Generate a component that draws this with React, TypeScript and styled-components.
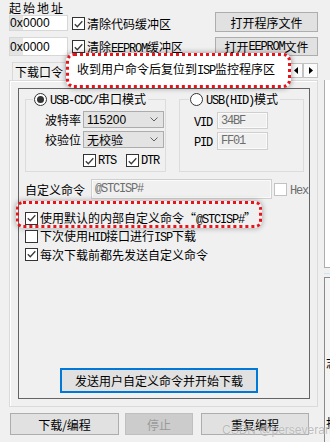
import React from 'react';
import styled, { createGlobalStyle } from 'styled-components';

const GlobalStyle = createGlobalStyle`
  html, body {
    margin: 0;
    padding: 0;
    background: #f0f0f0;
  }
  body {
    font-family: "Noto Sans CJK SC", "Liberation Sans", sans-serif;
    font-size: 12px;
    color: #000;
  }
  * {
    box-sizing: border-box;
  }
`;

const Screen = styled.div`
  position: relative;
  display: flex;
  width: 330px;
  height: 442px;
  overflow: hidden;
  background: #f0f0f0;
`;

const Main = styled.div`
  flex: none;
  width: 319px;
  padding: 0 1px 0 9px;
  display: flex;
  flex-direction: column;
`;

// SimSun-like half width latin
const Mono = styled.span`
  font-family: "Liberation Mono", monospace;
  font-size: 12px;
  letter-spacing: -1.2px;
`;

const Title = styled.div`
  height: 12px;
  line-height: 16px;
  font-size: 12px;
  letter-spacing: 2px;
  white-space: nowrap;
`;

const AddrRow = styled.div<{ $top: number }>`
  display: flex;
  align-items: flex-start;
  height: 20px;
  margin-top: ${({ $top }) => $top}px;
`;

const AddrField = styled.div<{ $dy: number; $h: number }>`
  width: 59px;
  height: ${({ $h }) => $h}px;
  margin-top: ${({ $dy }) => $dy}px;
  background: #fff;
  border: 1px solid #d7d7d7;
  display: flex;
  align-items: stretch;
  font-family: "Liberation Sans", sans-serif;
  font-size: 12px;
`;

const Prefix = styled.span`
  display: flex;
  align-items: center;
  width: 13px;
  background: #e4e4e4;
`;

const Digits = styled.span`
  display: flex;
  align-items: center;
`;

const CheckGroup = styled.label<{ $dy?: number; $gap?: number }>`
  flex: none;
  display: flex;
  align-items: center;
  gap: ${({ $gap }) => $gap ?? 2}px;
  margin-top: ${({ $dy }) => $dy ?? 0}px;
  height: 13px;
  white-space: nowrap;
`;

const Box = styled.span<{ $disabled?: boolean }>`
  flex: none;
  width: 13px;
  height: 13px;
  border: 1px solid ${({ $disabled }) => ($disabled ? '#c2c2c2' : '#333')};
  background: #fff;
  display: inline-flex;
  align-items: center;
  justify-content: center;
`;

const Button = styled.button<{ $w: number; $h: number; $ml?: number; $off?: boolean }>`
  flex: none;
  width: ${({ $w }) => $w}px;
  height: ${({ $h }) => $h}px;
  margin-left: ${({ $ml }) => ($ml === undefined ? 'auto' : `${$ml}px`)};
  padding: 0;
  background: ${({ $off }) => ($off ? '#cccccc' : '#e1e1e1')};
  border: 1px solid ${({ $off }) => ($off ? '#bfbfbf' : '#adadad')};
  color: ${({ $off }) => ($off ? '#9a9a9a' : '#000')};
  font-family: "Noto Sans CJK SC", "Liberation Sans", sans-serif;
  font-size: 12px;
  display: flex;
  align-items: center;
  justify-content: center;
  white-space: nowrap;
`;

const TabStrip = styled.div`
  position: relative;
  z-index: 2;
  display: flex;
  align-items: flex-start;
  height: 23px;
`;

const Tab = styled.div`
  flex: none;
  margin: 5px 0 0 3px;
  width: 54px;
  height: 18px;
  border: 1px solid #d9d9d9;
  border-bottom: none;
  display: flex;
  align-items: center;
  justify-content: center;
`;

const ActiveTab = styled.div`
  position: relative;
  z-index: 2;
  flex: none;
  margin-top: -4px;
  width: 225px;
  height: 35px;
  padding: 5px 0 0 8px;
  background: #fff;
  border: 3px dotted #e8141b;
  border-radius: 8px;
  box-shadow: 0 0 5px 1px rgba(0, 0, 0, 0.3);
  line-height: 16px;
  white-space: nowrap;
`;

const ScrollArrows = styled.div`
  display: flex;
  margin: 6px 0 0 -3px;
`;

const ArrowBox = styled.div`
  width: 15px;
  height: 15px;
  border: 1px solid #c3c3c3;
  background: #fbfbfb;
  display: flex;
  align-items: center;
  justify-content: center;
`;

const TabPage = styled.div`
  display: flex;
  height: 327px;
  border: 1px solid #dadada;
  box-shadow: inset 1px 1px 0 #fff;
  padding: 7px 7px 7px 8px;
`;

const Frame = styled.div`
  flex: 1;
  display: flex;
  flex-direction: column;
  border: 1px solid #646464;
  padding-left: 6px;
`;

const Groups = styled.div`
  display: flex;
  gap: 13px;
  margin-top: 10px;
`;

const Group = styled.div<{ $w: number }>`
  width: ${({ $w }) => $w}px;
  height: 73px;
  border: 1px solid #dcdcdc;
  display: flex;
  flex-direction: column;
`;

const Legend = styled.div<{ $x: number }>`
  align-self: flex-start;
  display: flex;
  align-items: center;
  gap: 3px;
  height: 14px;
  margin: -8px 0 0 ${({ $x }) => $x}px;
  padding: 0 2px 0 1px;
  background: #f0f0f0;
  white-space: nowrap;
`;

const RadioRing = styled.span`
  flex: none;
  width: 13px;
  height: 13px;
  border-radius: 50%;
  border: 1px solid #333;
  background: #fff;
  display: inline-flex;
  align-items: center;
  justify-content: center;
`;

const RadioDot = styled.span`
  width: 7px;
  height: 7px;
  border-radius: 50%;
  background: #333;
`;

const FieldRow = styled.div<{ $top: number; $h?: number; $ml?: number }>`
  display: flex;
  align-items: center;
  height: ${({ $h }) => $h ?? 17}px;
  margin: ${({ $top }) => $top}px 0 0 ${({ $ml }) => $ml ?? 0}px;
`;

const FieldLabel = styled.span<{ $w: number; $right?: boolean }>`
  flex: none;
  width: ${({ $w }) => $w}px;
  text-align: ${({ $right }) => ($right ? 'right' : 'left')};
  padding-right: ${({ $right }) => ($right ? 1 : 0)}px;
  white-space: nowrap;
`;

const Combo = styled.div`
  flex: none;
  width: 81px;
  height: 17px;
  margin-left: 1px;
  padding: 0 5px 0 3px;
  background: #e3e3e3;
  border: 1px solid #acacac;
  display: flex;
  align-items: center;
  justify-content: space-between;
  font-family: "Liberation Sans", "Noto Sans CJK SC", sans-serif;
`;

const DimField = styled.div<{ $w: number; $h: number }>`
  flex: none;
  width: ${({ $w }) => $w}px;
  height: ${({ $h }) => $h}px;
  padding-left: 3px;
  background: #f0f0f0;
  border: 1px solid #cfcfcf;
  box-shadow: inset 0 0 0 1px #fafafa;
  display: flex;
  align-items: center;
  color: #6d6d6d;
`;

const DimText = styled.span`
  color: #6d6d6d;
`;

const Options = styled.div`
  display: flex;
  flex-direction: column;
  margin-top: 10px;
`;

const OptionRow = styled.div`
  position: relative;
  display: flex;
  align-items: center;
  gap: 2px;
  height: 18px;
  white-space: nowrap;
`;

const Callout = styled.div`
  position: absolute;
  left: -9px;
  top: -8px;
  width: 246px;
  height: 27px;
  border: 3px dotted #e8141b;
  border-radius: 7px;
  box-shadow: 0 0 5px 1px rgba(0, 0, 0, 0.25);
  pointer-events: none;
`;

const SendButton = styled.button`
  width: 198px;
  height: 25px;
  margin: auto 0 5px 35px;
  padding: 0;
  background: #e1e1e1;
  border: 2px solid #0078d7;
  font-family: "Noto Sans CJK SC", sans-serif;
  font-size: 12px;
  color: #000;
`;

const BottomRow = styled.div`
  display: flex;
  margin-top: 6px;
`;

const Side = styled.div`
  flex: none;
  width: 11px;
  padding-left: 5px;
  display: flex;
  flex-direction: column;
`;

const SideList = styled.div`
  margin-top: 80px;
  height: 188px;
  background: #fff;
  border-left: 1px solid #adadad;
  border-bottom: 1px solid #adadad;
`;

const SideRule = styled.div`
  margin-top: 5px;
  height: 1px;
  background: #cde4f7;
`;

const SidePanel = styled.div`
  margin-top: 3px;
  flex: 1;
  background: #f4f4f4;
  border-left: 1px solid #8a8a8a;
  border-top: 1px solid #8a8a8a;
  padding: 78px 0 0 1px;
  font-size: 12px;
  line-height: 14px;
  overflow: hidden;
`;

const SideGlyph = styled.div<{ $top: number }>`
  margin-top: ${({ $top }) => $top}px;
`;

const Watermark = styled.div`
  position: absolute;
  left: 222px;
  top: 423px;
  font-family: "Liberation Sans", sans-serif;
  font-size: 12px;
  color: rgba(110, 110, 110, 0.45);
  text-shadow: 0 0 1px rgba(255, 255, 255, 0.9);
  white-space: nowrap;
  pointer-events: none;
`;

const CheckMark = () => (
  <svg width="9" height="8" viewBox="0 0 9 8">
    <path d="M0.8 4.2 L3.3 6.7 L8.3 1.2" fill="none" stroke="#3a3a3a" strokeWidth="1.3" />
  </svg>
);

const Check = ({ on, off }: { on?: boolean; off?: boolean }) => (
  <Box $disabled={off}>{on && <CheckMark />}</Box>
);

const Chevron = () => (
  <svg width="8" height="5" viewBox="0 0 8 5">
    <path d="M0.5 0.5 L4 4 L7.5 0.5" fill="none" stroke="#606060" strokeWidth="1" />
  </svg>
);

const Tri = ({ dir }: { dir: 'l' | 'r' }) => (
  <svg width="4" height="7" viewBox="0 0 4 7">
    <path d={dir === 'l' ? 'M4 0 L0 3.5 L4 7 Z' : 'M0 0 L4 3.5 L0 7 Z'} fill="#000" />
  </svg>
);

const Radio = ({ on }: { on?: boolean }) => <RadioRing>{on && <RadioDot />}</RadioRing>;

const App = () => {
  return (
    <Screen>
      <GlobalStyle />
      <Main>
        <Title>起始地址</Title>
        <AddrRow $top={0}>
          <AddrField $dy={3} $h={16}>
            <Prefix>0x</Prefix>
            <Digits>0000</Digits>
          </AddrField>
          <CheckGroup $dy={5} style={{ marginLeft: 4 }}>
            <Check on />
            清除代码缓冲区
          </CheckGroup>
          <Button $w={103} $h={20}>打开程序文件</Button>
        </AddrRow>
        <AddrRow $top={5}>
          <AddrField $dy={0} $h={19}>
            <Prefix>0x</Prefix>
            <Digits>0000</Digits>
          </AddrField>
          <CheckGroup $dy={3} style={{ marginLeft: 4 }}>
            <Check on />
            <span>
              清除<Mono>EEPROM</Mono>缓冲区
            </span>
          </CheckGroup>
          <Button $w={103} $h={19}>
            打开<Mono>EEPROM</Mono>文件
          </Button>
        </AddrRow>

        <TabStrip>
          <Tab>下载口令</Tab>
          <ActiveTab>
            收到用户命令后复位到<Mono>ISP</Mono>监控程序区
          </ActiveTab>
          <ScrollArrows>
            <ArrowBox>
              <Tri dir="l" />
            </ArrowBox>
            <ArrowBox>
              <Tri dir="r" />
            </ArrowBox>
          </ScrollArrows>
        </TabStrip>

        <TabPage>
          <Frame>
            <Groups>
              <Group $w={141}>
                <Legend $x={7}>
                  <Radio on />
                  <span>
                    <Mono>USB-CDC/</Mono>串口模式
                  </span>
                </Legend>
                <FieldRow $top={5}>
                  <FieldLabel $w={56} $right>波特率</FieldLabel>
                  <Combo>
                    <span>115200</span>
                    <Chevron />
                  </Combo>
                </FieldRow>
                <FieldRow $top={3}>
                  <FieldLabel $w={56} $right>校验位</FieldLabel>
                  <Combo>
                    <span>无校验</span>
                    <Chevron />
                  </Combo>
                </FieldRow>
                <FieldRow $top={6} $h={13} $ml={57}>
                  <CheckGroup>
                    <Check on />
                    <Mono>RTS</Mono>
                  </CheckGroup>
                  <CheckGroup style={{ marginLeft: 10 }}>
                    <Check on />
                    <Mono>DTR</Mono>
                  </CheckGroup>
                </FieldRow>
              </Group>
              <Group $w={125}>
                <Legend $x={9}>
                  <Radio />
                  <span>
                    <Mono>USB(HID)</Mono>模式
                  </span>
                </Legend>
                <FieldRow $top={6} $ml={14}>
                  <FieldLabel $w={23}>
                    <Mono>VID</Mono>
                  </FieldLabel>
                  <DimField $w={51} $h={17}>
                    <Mono>34BF</Mono>
                  </DimField>
                </FieldRow>
                <FieldRow $top={3} $h={18} $ml={14}>
                  <FieldLabel $w={23}>
                    <Mono>PID</Mono>
                  </FieldLabel>
                  <DimField $w={51} $h={18}>
                    <Mono>FF01</Mono>
                  </DimField>
                </FieldRow>
              </Group>
            </Groups>

            <FieldRow $top={7} $h={20}>
              <FieldLabel $w={66}>自定义命令</FieldLabel>
              <DimField $w={181} $h={20}>
                <Mono>@STCISP#</Mono>
              </DimField>
              <CheckGroup $gap={3} style={{ marginLeft: 2 }}>
                <Check off />
                <DimText>
                  <Mono>Hex</Mono>
                </DimText>
              </CheckGroup>
            </FieldRow>

            <Options>
              <OptionRow>
                <Check on />
                <span>
                  使用默认的内部自定义命令“<Mono>@STCISP#</Mono>”
                </span>
                <Callout />
              </OptionRow>
              <OptionRow>
                <Check />
                <span>
                  下次使用<Mono>HID</Mono>接口进行<Mono>ISP</Mono>下载
                </span>
              </OptionRow>
              <OptionRow>
                <Check on />
                <span>每次下载前都先发送自定义命令</span>
              </OptionRow>
            </Options>

            <SendButton>发送用户自定义命令并开始下载</SendButton>
          </Frame>
        </TabPage>

        <BottomRow>
          <Button $w={109} $h={22} $ml={1}>下载/编程</Button>
          <Button $w={68} $h={22} $ml={6} $off>停止</Button>
          <Button $w={108} $h={22} $ml={8}>重复编程</Button>
        </BottomRow>
      </Main>

      <Side>
        <SideList />
        <SideRule />
        <SidePanel>
          <SideGlyph $top={0}>志</SideGlyph>
          <SideGlyph $top={46}>打</SideGlyph>
        </SidePanel>
      </Side>

      <Watermark>CSDN @perseverance52</Watermark>
    </Screen>
  );
};

export default App;
